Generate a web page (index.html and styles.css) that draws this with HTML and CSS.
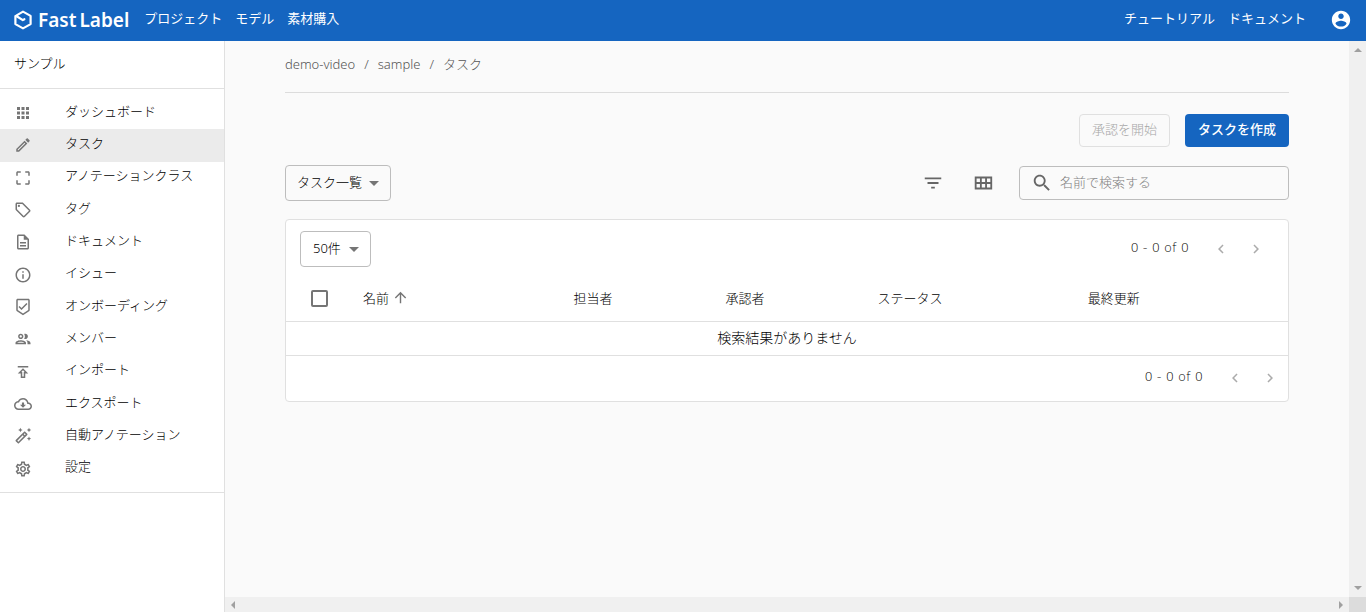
FILE: index.html
```html
<!DOCTYPE html>
<html lang="ja">
<head>
<meta charset="utf-8">
<meta name="viewport" content="width=device-width, initial-scale=1">
<title>FastLabel</title>
<link rel="stylesheet" href="styles.css">
</head>
<body>
<div class="app">
  <header class="topbar">
    <a class="brand" href="#">
      <svg class="brand-mark" viewBox="0 0 20 20" aria-hidden="true"><path d="M3.200 5.600 10 1.600l7.600 4.300v8.200L10 18.400 2.400 14.100V6.200M4.500 6.700l5.300 3.400 1.600-.9" fill="none" stroke="currentColor" stroke-width="2.200" stroke-linejoin="round" stroke-linecap="round"/></svg>
      <span class="brand-name"><span>Fast</span><span>Label</span></span>
    </a>
    <nav class="topnav">
      <a href="#">プロジェクト</a>
      <a href="#">モデル</a>
      <a href="#">素材購入</a>
    </nav>
    <nav class="topnav topnav-right">
      <a href="#">チュートリアル</a>
      <a href="#">ドキュメント</a>
    </nav>
    <button class="account" type="button" aria-label="アカウント">
      <svg class="icon-md" viewBox="0 0 24 24"><path d="M12 2C6.480 2 2 6.480 2 12s4.480 10 10 10 10-4.480 10-10S17.520 2 12 2zm0 3c1.660 0 3 1.340 3 3s-1.340 3-3 3-3-1.340-3-3 1.340-3 3-3zm0 14.200c-2.500 0-4.710-1.280-6-3.220.03-1.990 4-3.080 6-3.080 1.990 0 5.970 1.090 6 3.080-1.290 1.940-3.500 3.220-6 3.220z"/></svg>
    </button>
  </header>

  <aside class="sidebar">
    <div class="workspace">サンプル</div>
    <nav class="menu">
      <a class="menu-item" href="#"><svg class="icon" viewBox="0 0 24 24"><path d="M4 8h4V4H4v4zm6 12h4v-4h-4v4zm-6 0h4v-4H4v4zm0-6h4v-4H4v4zm6 0h4v-4h-4v4zm6-10v4h4V4h-4zm-6 4h4V4h-4v4zm6 6h4v-4h-4v4zm0 6h4v-4h-4v4z"/></svg><span>ダッシュボード</span></a>
      <a class="menu-item menu-item-active" href="#" aria-current="page"><svg class="icon" viewBox="0 0 24 24"><path d="M14.060 9.020l.92.92L5.920 19H5v-.92l9.060-9.060M17.660 3c-.25 0-.51.1-.7.290l-1.830 1.830 3.750 3.750 1.830-1.830c.39-.39.39-1.020 0-1.410l-2.340-2.340c-.2-.2-.45-.29-.71-.29zm-3.600 3.190L3 17.250V21h3.750L17.810 9.940l-3.750-3.750z"/></svg><span>タスク</span></a>
      <a class="menu-item" href="#"><svg class="icon" viewBox="0 0 24 24"><path d="M3 5v4h2V5h4V3H5c-1.100 0-2 .9-2 2zm2 10H3v4c0 1.100.9 2 2 2h4v-2H5v-4zm14 4h-4v2h4c1.100 0 2-.9 2-2v-4h-2v4zm0-16h-4v2h4v4h2V5c0-1.100-.9-2-2-2z"/></svg><span>アノテーションクラス</span></a>
      <a class="menu-item" href="#"><svg class="icon" viewBox="0 0 24 24"><path d="M21.410 11.580l-9-9C12.050 2.220 11.550 2 11 2H4c-1.100 0-2 .9-2 2v7c0 .55.22 1.050.59 1.420l9 9c.36.36.86.58 1.410.58s1.050-.22 1.410-.59l7-7c.37-.36.59-.86.59-1.410s-.23-1.060-.59-1.420zM13 20.010L4 11V4h7v-.01l9 9-7 7.020z"/><circle cx="6.500" cy="6.500" r="1.500"/></svg><span>タグ</span></a>
      <a class="menu-item" href="#"><svg class="icon" viewBox="0 0 24 24"><path d="M8 16h8v2H8zm0-4h8v2H8zm6-10H6c-1.100 0-2 .9-2 2v16c0 1.100.89 2 1.990 2H18c1.100 0 2-.9 2-2V8l-6-6zm4 18H6V4h7v5h5v11z"/></svg><span>ドキュメント</span></a>
      <a class="menu-item" href="#"><svg class="icon" viewBox="0 0 24 24"><path d="M11 7h2v2h-2zm0 4h2v6h-2zm1-9C6.480 2 2 6.480 2 12s4.480 10 10 10 10-4.480 10-10S17.520 2 12 2zm0 18c-4.410 0-8-3.590-8-8s3.590-8 8-8 8 3.590 8 8-3.590 8-8 8z"/></svg><span>イシュー</span></a>
      <a class="menu-item" href="#"><svg class="icon" viewBox="0 0 24 24"><path d="M19 1H5c-1.100 0-1.990.9-1.990 2L3 15.930c0 .69.35 1.300.88 1.660L12 23l8.110-5.410c.53-.36.88-.97.88-1.660L21 3c0-1.100-.9-2-2-2zm-7 19.600l-7-4.660V3h14v12.930l-7 4.670zm-2.010-7.420l-2.580-2.590L6 12l4 4 8-8-1.420-1.420z"/></svg><span>オンボーディング</span></a>
      <a class="menu-item" href="#"><svg class="icon" viewBox="0 0 24 24"><path d="M9 13.750c-2.340 0-7 1.170-7 3.500V19h14v-1.750c0-2.330-4.660-3.500-7-3.500zM4.340 17c.84-.58 2.870-1.250 4.660-1.250s3.820.67 4.660 1.250H4.340zM9 12c1.930 0 3.500-1.570 3.500-3.500S10.930 5 9 5 5.500 6.570 5.500 8.500 7.070 12 9 12zm0-5c.83 0 1.500.67 1.500 1.500S9.830 10 9 10s-1.500-.67-1.500-1.500S8.170 7 9 7zm7.040 6.810c1.160.84 1.960 1.960 1.960 3.440V19h4v-1.750c0-2.020-3.500-3.170-5.960-3.440zM15 12c1.930 0 3.500-1.570 3.500-3.500S16.930 5 15 5c-.54 0-1.040.13-1.500.35.63.89 1 1.980 1 3.150s-.37 2.260-1 3.150c.46.22.96.35 1.500.35z"/></svg><span>メンバー</span></a>
      <a class="menu-item" href="#"><svg class="icon" viewBox="0 0 24 24"><path d="M5 4v2h14V4H5zm0 10h4v6h6v-6h4l-7-7-7 7zm8-2v6h-2v-6H9.830L12 9.830 14.170 12H13z"/></svg><span>インポート</span></a>
      <a class="menu-item" href="#"><svg class="icon" viewBox="0 0 24 24"><path d="M19.350 10.040C18.670 6.590 15.640 4 12 4 9.110 4 6.600 5.640 5.350 8.040 2.340 8.360 0 10.910 0 14c0 3.310 2.690 6 6 6h13c2.760 0 5-2.240 5-5 0-2.640-2.050-4.780-4.650-4.960zM19 18H6c-2.210 0-4-1.790-4-4 0-2.050 1.530-3.760 3.560-3.970l1.070-.11.5-.95C8.080 7.140 9.940 6 12 6c2.620 0 4.880 1.860 5.390 4.430l.3 1.500 1.530.11c1.560.1 2.780 1.410 2.780 2.960 0 1.650-1.350 3-3 3zm-5.550-8h-2.900v3H8l4 4 4-4h-2.550z"/></svg><span>エクスポート</span></a>
      <a class="menu-item" href="#"><svg class="icon" viewBox="0 0 24 24"><path d="M20 7l.94-2.060L23 4l-2.060-.94L20 1l-.94 2.060L17 4l2.060.94zM8.500 7l.94-2.060L11.500 4l-2.060-.94L8.500 1l-.94 2.060L5.500 4l2.060.94zM20 12.500l-.94 2.060-2.060.94 2.060.94.94 2.060.94-2.060L23 15.500l-2.060-.94zM17.710 9.120l-2.830-2.830c-.2-.19-.45-.29-.71-.29s-.51.1-.71.290L2.290 17.460c-.39.39-.39 1.020 0 1.410l2.830 2.830c.2.2.46.3.71.3s.51-.1.71-.29l11.170-11.170c.39-.39.39-1.030 0-1.420zm-3.540-.7l1.410 1.410L14.410 11 13 9.590l1.170-1.170zM5.830 19.590l-1.410-1.410L11.590 11 13 12.410l-7.170 7.180z"/></svg><span>自動アノテーション</span></a>
      <a class="menu-item" href="#"><svg class="icon" viewBox="0 0 24 24"><path d="M19.430 12.980c.04-.32.07-.64.07-.98s-.03-.66-.07-.98l2.110-1.650c.19-.15.24-.42.12-.64l-2-3.460c-.12-.22-.39-.3-.61-.22l-2.490 1c-.52-.4-1.080-.73-1.690-.98l-.38-2.650C14.460 2.180 14.250 2 14 2h-4c-.25 0-.46.18-.49.42l-.38 2.650c-.61.25-1.170.59-1.690.98l-2.490-1c-.23-.09-.49 0-.61.22l-2 3.460c-.13.22-.07.49.12.64l2.110 1.650c-.04.32-.07.65-.07.98s.03.66.07.98l-2.110 1.650c-.19.15-.24.42-.12.64l2 3.460c.12.22.39.3.61.22l2.490-1c.52.4 1.080.73 1.690.98l.38 2.650c.03.24.24.42.49.42h4c.25 0 .46-.18.49-.42l.38-2.650c.61-.25 1.170-.59 1.690-.98l2.490 1c.23.09.49 0 .61-.22l2-3.460c.12-.22.07-.49-.12-.64l-2.110-1.650zm-1.980-1.710c.04.31.05.52.05.73s-.02.43-.05.73l-.14 1.130.89.7 1.080.84-.7 1.210-1.270-.51-1.040-.42-.9.68c-.43.32-.84.56-1.250.73l-1.060.43-.16 1.130-.2 1.350h-1.400l-.19-1.350-.16-1.130-1.060-.43c-.43-.18-.83-.41-1.230-.71l-.91-.7-1.060.43-1.270.51-.7-1.210 1.080-.84.89-.7-.14-1.130c-.03-.31-.05-.54-.05-.74s.02-.43.05-.73l.14-1.130-.89-.7-1.080-.84.7-1.210 1.270.51 1.040.42.9-.68c.43-.32.84-.56 1.250-.73l1.060-.43.16-1.130.2-1.350h1.390l.19 1.350.16 1.130 1.060.43c.43.18.83.41 1.230.71l.91.7 1.060-.43 1.270-.51.7 1.210-1.070.85-.89.7.14 1.130zM12 8c-2.210 0-4 1.790-4 4s1.790 4 4 4 4-1.790 4-4-1.790-4-4-4zm0 6c-1.100 0-2-.9-2-2s.9-2 2-2 2 .9 2 2-.9 2-2 2z"/></svg><span>設定</span></a>
    </nav>
  </aside>

  <main class="content">
    <nav class="breadcrumb" aria-label="パンくず">
      <a href="#">demo-video</a><span>/</span><a href="#">sample</a><span>/</span><a href="#">タスク</a>
    </nav>

    <div class="actions">
      <button class="btn btn-outline" type="button" disabled>承認を開始</button>
      <button class="btn btn-primary" type="button">タスクを作成</button>
    </div>

    <div class="toolbar">
      <div class="select">
        <select aria-label="表示"><option>タスク一覧</option></select>
        <svg class="caret" viewBox="0 0 10 5"><path d="M0 0h10L5 5z"/></svg>
      </div>
      <div class="tools">
        <button class="icon-btn" type="button" aria-label="フィルター"><svg class="icon-md" viewBox="0 0 24 24"><path d="M10 18h4v-2h-4v2zM3 6v2h18V6H3zm3 7h12v-2H6v2z"/></svg></button>
        <button class="icon-btn" type="button" aria-label="グリッド表示"><svg class="icon-md" viewBox="0 0 24 24"><path fill-rule="evenodd" d="M3 5v14h19V5H3zm2 2h3.670v4H5V7zm5.670 0h3.660v4h-3.660V7zm5.660 0H20v4h-3.670V7zM5 13h3.670v4H5v-4zm5.670 0h3.660v4h-3.660v-4zm5.660 0H20v4h-3.670v-4z"/></svg></button>
        <label class="search">
          <svg class="icon-md" viewBox="0 0 24 24"><path d="M15.500 14h-.79l-.28-.27C15.410 12.590 16 11.110 16 9.500 16 5.910 13.090 3 9.500 3S3 5.910 3 9.500 5.910 16 9.500 16c1.610 0 3.090-.59 4.230-1.570l.27.28v.79l5 4.990L20.490 19l-4.990-5zm-6 0C7.010 14 5 11.990 5 9.500S7.010 5 9.500 5 14 7.010 14 9.500 11.990 14 9.500 14z"/></svg>
          <input type="text" placeholder="名前で検索する" aria-label="名前で検索する">
        </label>
      </div>
    </div>

    <section class="card">
      <div class="card-head">
        <div class="select select-count">
          <select aria-label="表示件数"><option>50件</option></select>
          <svg class="caret" viewBox="0 0 10 5"><path d="M0 0h10L5 5z"/></svg>
        </div>
        <div class="pager">
          <span>0 - 0 of 0</span>
          <button type="button" disabled aria-label="前へ"><svg class="icon" viewBox="0 0 24 24"><path d="M15.410 7.410 14 6l-6 6 6 6 1.410-1.410L10.830 12z"/></svg></button>
          <button type="button" disabled aria-label="次へ"><svg class="icon" viewBox="0 0 24 24"><path d="M10 6 8.590 7.410 13.170 12l-4.580 4.590L10 18l6-6z"/></svg></button>
        </div>
      </div>
      <table class="tasks">
        <thead>
          <tr>
            <th class="col-check"><input class="check" type="checkbox" aria-label="すべて選択"></th>
            <th class="col-wide"><span class="sort">名前<svg class="icon-sort" viewBox="0 0 24 24"><path d="M4 12l1.410 1.410L11 7.830V20h2V7.830l5.580 5.590L20 12l-8-8-8 8z"/></svg></span></th>
            <th class="col-mid">担当者</th>
            <th class="col-mid">承認者</th>
            <th class="col-wide">ステータス</th>
            <th>最終更新</th>
          </tr>
        </thead>
        <tbody>
          <tr><td colspan="6">検索結果がありません</td></tr>
        </tbody>
      </table>
      <div class="card-foot">
        <div class="pager">
          <span>0 - 0 of 0</span>
          <button type="button" disabled aria-label="前へ"><svg class="icon" viewBox="0 0 24 24"><path d="M15.410 7.410 14 6l-6 6 6 6 1.410-1.410L10.830 12z"/></svg></button>
          <button type="button" disabled aria-label="次へ"><svg class="icon" viewBox="0 0 24 24"><path d="M10 6 8.590 7.410 13.170 12l-4.580 4.590L10 18l6-6z"/></svg></button>
        </div>
      </div>
    </section>
  </main>

  <div class="scroll-y" aria-hidden="true">
    <svg class="tri" viewBox="0 0 8 8"><path d="M0 6h8L4 2z"/></svg>
    <svg class="tri" viewBox="0 0 8 8"><path d="M0 2h8L4 6z"/></svg>
  </div>
  <div class="scroll-x" aria-hidden="true">
    <svg class="tri" viewBox="0 0 8 8"><path d="M6 0v8L2 4z"/></svg>
    <svg class="tri" viewBox="0 0 8 8"><path d="M2 0v8l4-4z"/></svg>
  </div>
  <div class="scroll-corner" aria-hidden="true"></div>
</div>
</body>
</html>
```

FILE: styles.css
```css
* {
  box-sizing: border-box;
}

body {
  margin: 0;
  font-family: "Noto Sans", "Noto Sans CJK JP", sans-serif;
  font-size: 13px;
  font-weight: 300;
  line-height: 20px;
  color: #000;
  background: #fafafa;
}

button,
input,
select {
  font: inherit;
  color: inherit;
}

a {
  color: inherit;
  text-decoration: none;
}

svg {
  display: block;
  flex: none;
  fill: currentColor;
}

.app {
  display: grid;
  grid-template-columns: 225px 1fr 17px;
  grid-template-rows: 41px 1fr 15px;
  height: 100vh;
}

/* Top bar */
.topbar {
  grid-column: 1 / -1;
  display: flex;
  align-items: center;
  padding: 0 14px 2px 13px;
  color: #fff;
  background: #1565c0;
}

.brand {
  display: flex;
  align-items: center;
  gap: 5px;
  margin-right: 15px;
}

.brand-mark {
  width: 20px;
  height: 20px;
}

.brand-name {
  display: flex;
  gap: 3px;
  font-size: 19px;
  font-weight: 600;
}

.topnav {
  display: flex;
  gap: 13px;
  padding-bottom: 3px;
}

.topnav a {
  font-weight: 400;
}

.topnav-right {
  margin-left: auto;
}

.account {
  margin-left: 24px;
  padding: 0;
  border: 0;
  color: #fff;
  background: none;
}

/* Icons */
.icon {
  width: 18px;
  height: 18px;
}

.icon-md {
  width: 22px;
  height: 22px;
}

.icon-sort {
  width: 17px;
  height: 17px;
  color: #757575;
}

/* Sidebar */
.sidebar {
  grid-row: 2 / -1;
  border-right: 1px solid #e0e0e0;
  background: #fff;
}

.workspace {
  padding: 12px 14px 15px;
  border-bottom: 1px solid #e0e0e0;
}

.menu {
  display: grid;
  grid-auto-rows: 1fr;
  min-height: 404px;
  padding: 8px 0 7px;
  border-bottom: 1px solid #e0e0e0;
}

.menu-item {
  display: flex;
  align-items: center;
  gap: 33px;
  padding: 0 14px;
}

.menu-item span {
  padding-bottom: 5px;
}

.menu-item .icon {
  color: #757575;
}

.menu-item-active {
  background: #ebebeb;
}

/* Main area */
.content {
  min-width: 0;
  overflow: hidden;
  padding: 0 60px;
}

.breadcrumb {
  display: flex;
  gap: 9px;
  padding: 13px 0 18px;
  border-bottom: 1px solid #dcdcdc;
  color: #555;
}

.actions {
  display: flex;
  justify-content: flex-end;
  gap: 15px;
  padding: 21px 0 18px;
}

.btn {
  padding: 4px 12px 7px;
  border: 1px solid transparent;
  border-radius: 4px;
}

.btn-outline {
  border-color: #e0e0e0;
  color: #a6a6a6;
  background: none;
}

.btn-primary {
  color: #fff;
  font-weight: 500;
  background: #1565c0;
}

.toolbar {
  display: flex;
  align-items: center;
  justify-content: space-between;
}

.tools {
  display: flex;
  align-items: center;
  gap: 28px;
}

.icon-btn {
  padding: 0;
  border: 0;
  color: #666;
  background: none;
}

.icon-btn + .search {
  margin-left: -3px;
}

.search {
  display: flex;
  align-items: center;
  gap: 7px;
  width: 270px;
  height: 34px;
  padding: 0 11px;
  border: 1px solid #bdbdbd;
  border-radius: 4px;
  color: #666;
}

.search input {
  flex: 1;
  min-width: 0;
  padding: 0 0 2px;
  border: 0;
  outline: 0;
  background: none;
}

.search input::placeholder {
  color: #808080;
}

.select {
  display: grid;
  align-items: center;
}

.select > * {
  grid-area: 1 / 1;
}

.select select {
  padding: 6px 27px 8px 11px;
  border: 1px solid #bdbdbd;
  border-radius: 4px;
  background: none;
  appearance: none;
}

.select-count select {
  padding: 6px 29px 8px 12px;
}

.caret {
  width: 10px;
  height: 5px;
  margin-right: 12px;
  justify-self: end;
  color: #757575;
  pointer-events: none;
}

/* Task list card */
.card {
  margin-top: 18px;
  border: 1px solid #e0e0e0;
  border-radius: 4px;
  background: #fff;
}

.card-head {
  display: flex;
  align-items: center;
  justify-content: space-between;
  padding: 11px 23px 9px 14px;
}

.card-foot {
  display: flex;
  justify-content: flex-end;
  padding: 11px 9px;
}

.pager {
  display: flex;
  align-items: center;
  gap: 17px;
}

.pager span {
  margin-right: 6px;
  padding-bottom: 3px;
  font-family: "DejaVu Sans", sans-serif;
}

.pager button {
  padding: 0;
  border: 0;
  color: #ababab;
  background: none;
}

.tasks {
  width: 100%;
  table-layout: fixed;
  border-collapse: collapse;
}

.tasks th {
  height: 45px;
  padding: 0 15px 1px;
  text-align: left;
  font-weight: 300;
  border-bottom: 1px solid #e0e0e0;
}

.tasks td {
  height: 34px;
  padding: 0;
  font-size: 14px;
  text-align: center;
  border-bottom: 1px solid #e0e0e0;
}

.tasks .col-check {
  width: 62px;
  padding: 0 0 0 25px;
}

.col-wide {
  width: 21%;
}

.col-mid {
  width: 152px;
}

.sort {
  display: flex;
  align-items: center;
  gap: 3px;
}

.check {
  display: block;
  width: 17px;
  height: 17px;
  margin: 0;
  border: 2px solid #757575;
  border-radius: 2px;
  background: #fff;
  appearance: none;
}

/* Scroll bars */
.scroll-y,
.scroll-x {
  display: flex;
  align-items: center;
  justify-content: space-between;
  padding: 5px 4px;
  color: #a0a0a0;
  background: #f0f0f0;
}

.scroll-y {
  flex-direction: column;
}

.scroll-x {
  grid-column: 2;
}

.scroll-corner {
  background: #dcdcdc;
}

.tri {
  width: 8px;
  height: 8px;
}
```
